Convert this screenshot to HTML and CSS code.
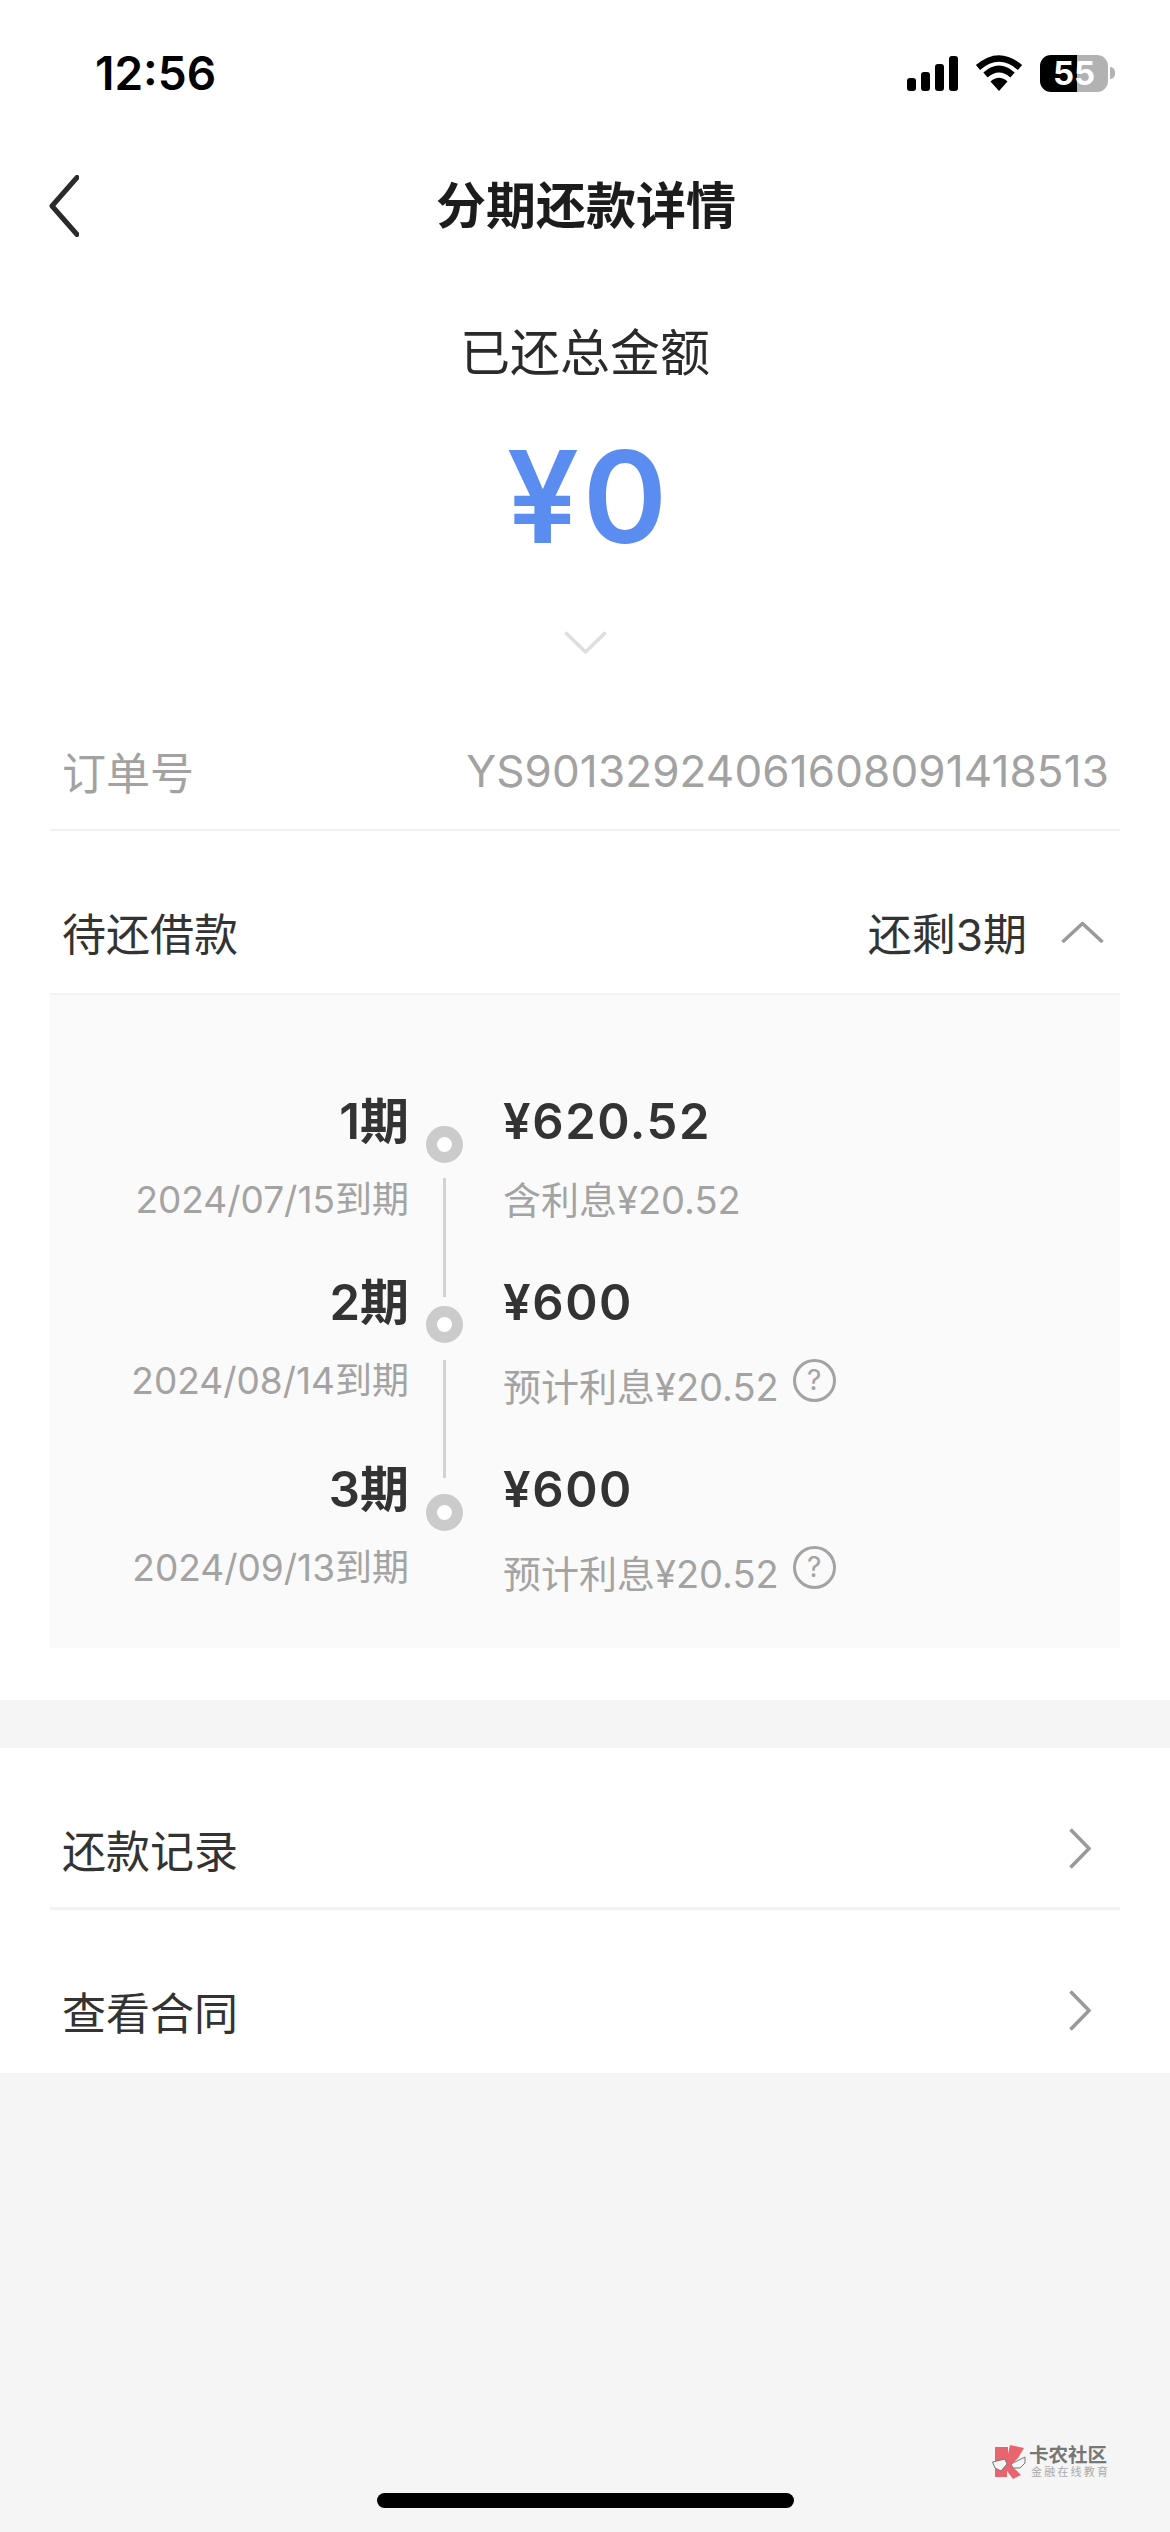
FILE: index.html
```html
<!DOCTYPE html>
<html>
	<head>
		<meta charset="utf-8">
		<title>分期还款详情</title>
		<link rel="stylesheet" href="styles.css">
	</head>
	<body>
	<div class="page">
		<div class="status">
			<span class="time">12:56</span>
			<div class="status-icons">
				<svg class="signal" width="51" height="35" viewBox="0 0 51 35">
					<rect x="0" y="22" width="9" height="13" rx="3"/>
					<rect x="14" y="16" width="9" height="19" rx="3"/>
					<rect x="28" y="8" width="9" height="27" rx="3"/>
					<rect x="42" y="0" width="9" height="35" rx="3"/>
				</svg>
				<svg class="wifi" width="48" height="36" viewBox="0 0 48 36">
					<path d="M24 36 L15.5 26.5 Q24 19 32.5 26.5 Z"/>
					<path d="M3 12.5 Q24 -5.5 45 12.5" fill="none" stroke="#000" stroke-width="6.5" stroke-linecap="butt"/>
					<path d="M10.5 20 Q24 8 37.5 20" fill="none" stroke="#000" stroke-width="6.5" stroke-linecap="butt"/>
				</svg>
				<div class="battery">
					<div class="battery-body"><span>55</span></div>
					<i class="battery-nub"></i>
				</div>
			</div>
		</div>

		<div class="nav">
			<svg class="back" width="30" height="62" viewBox="0 0 30 62">
				<path d="M28 2.5 L3 31 L28 59.5" fill="none" stroke="#2b2b2b" stroke-width="5" stroke-linecap="round" stroke-linejoin="round"/>
			</svg>
			<h1 class="title">分期还款详情</h1>
		</div>

		<div class="summary">
			<div class="summary-label">已还总金额</div>
			<div class="summary-amount">¥0</div>
			<svg class="summary-more" width="43" height="23" viewBox="0 0 43 23">
				<path d="M1.5 1.5 L21.5 21 L41.5 1.5" fill="none" stroke="#dedede" stroke-width="3.5"/>
			</svg>
		</div>

		<div class="order-row">
			<span>订单号</span>
			<span class="order-no">YS90132924061608091418513</span>
		</div>

		<div class="pending-row">
			<span>待还借款</span>
			<div class="pending-left">
				<span>还剩3期</span>
				<svg width="43" height="21" viewBox="0 0 43 21">
					<path d="M1.5 20 L21.5 1.5 L41.5 20" fill="none" stroke="#9a9a9a" stroke-width="3.5"/>
				</svg>
			</div>
		</div>

		<div class="plan">
			<div class="plan-left">
				<div class="period first">
					<div class="term">1期</div>
					<div class="due">2024/07/15到期</div>
				</div>
				<div class="period second">
					<div class="term">2期</div>
					<div class="due">2024/08/14到期</div>
				</div>
				<div class="period">
					<div class="term">3期</div>
					<div class="due">2024/09/13到期</div>
				</div>
			</div>
			<div class="plan-axis">
				<i class="dot"></i>
				<i class="line"></i>
				<i class="dot"></i>
				<i class="line next"></i>
				<i class="dot"></i>
			</div>
			<div class="plan-right">
				<div class="period first">
					<div class="money">¥620.52</div>
					<div class="interest"><span>含利息¥20.52</span></div>
				</div>
				<div class="period second">
					<div class="money">¥600</div>
					<div class="interest estimate"><span>预计利息¥20.52</span><i class="help">?</i></div>
				</div>
				<div class="period">
					<div class="money">¥600</div>
					<div class="interest estimate"><span>预计利息¥20.52</span><i class="help">?</i></div>
				</div>
			</div>
		</div>

		<div class="band"></div>

		<div class="links">
			<div class="link-row top">
				<span>还款记录</span>
				<svg width="22" height="41" viewBox="0 0 22 41"><path d="M1.5 1.5 L20 20.5 L1.5 39.5" fill="none" stroke="#999" stroke-width="3.5"/></svg>
			</div>
			<div class="link-row">
				<span>查看合同</span>
				<svg width="22" height="41" viewBox="0 0 22 41"><path d="M1.5 1.5 L20 20.5 L1.5 39.5" fill="none" stroke="#999" stroke-width="3.5"/></svg>
			</div>
		</div>

		<div class="foot">
			<i class="home-bar"></i>
			<div class="mark">
				<svg width="34" height="34" viewBox="0 0 34 34">
					<path d="M3 2 H16 V9 L18 0 L32 3 L26 13 L19 20 L29 30 L21 34 L15 26 V32 H3 Z" fill="#e8656f"/>
					<path d="M0.5 17 L13 14 L15 19 L9 26 L3 23 Z M19 19 L33 12 L33 18 L28 23 L21 23 Z" fill="#f4f4f4" stroke="#777" stroke-width="1"/>
				</svg>
				<div class="mark-text">
					<b>卡农社区</b>
					<span>金融在线教育</span>
				</div>
			</div>
		</div>
	</div>
	</body>
</html>
```

FILE: styles.css
```css
* {margin: 0;padding: 0;box-sizing: border-box;}
i {font-style: normal;}
svg {display: block;flex-shrink: 0;}
body {
	background: #fff;
	font-family: Inter, "Noto Sans CJK SC", sans-serif;
	color: #333;
}
.page {
	width: 1170px;
	height: 2532px;
	display: flex;
	flex-direction: column;
	position: relative;
	overflow: hidden;
}

/* status bar */
.status {
	height: 146px;
	flex-shrink: 0;
	display: flex;
	align-items: center;
	justify-content: space-between;
	padding: 0 55px 0 95px;
}
.time {
	font-size: 46px;
	font-weight: 600;
	color: #000;
}
.status-icons {
	display: flex;
	align-items: center;
}
.wifi {margin-left: 17px;}
.battery {
	display: flex;
	align-items: center;
	margin-left: 17px;
}
.battery-body {
	width: 68px;
	height: 37px;
	border-radius: 11px;
	background: linear-gradient(to right, #000 54%, #b2b2b2 54%);
	color: #fff;
	font-size: 33px;
	font-weight: 700;
	line-height: 37px;
	text-align: center;
}
.battery-nub {
	width: 5px;
	height: 12px;
	margin-left: 2px;
	background: #b2b2b2;
	border-radius: 0 6px 6px 0;
}

/* nav */
.nav {
	height: 120px;
	flex-shrink: 0;
	display: grid;
	grid-template-columns: 1fr auto 1fr;
	align-items: center;
	padding-left: 49px;
}
.title {
	font-size: 50px;
	font-weight: 600;
	color: #1c1c1c;
	line-height: 60px;
	margin-right: 47px;
}

/* summary */
.summary {
	display: flex;
	flex-direction: column;
	align-items: center;
	padding-top: 57px;
	flex-shrink: 0;
}
.summary-label {
	font-size: 50px;
	line-height: 60px;
	color: #2a2a2a;
}
.summary-amount {
	margin: 51px 0 0 8px;
	font-size: 128px;
	line-height: 125px;
	font-weight: 600;
	letter-spacing: 4px;
	color: #5b8df1;
}
.summary-more {margin-top: 72px;}

.order-row,
.pending-row {
	margin: 0 50px;
	padding: 0 11px 0 12px;
	display: flex;
	justify-content: space-between;
	align-items: center;
	font-size: 44px;
	flex-shrink: 0;
}
.order-row {
	margin-top: 59px;
	height: 118px;
	color: #a2a2a2;
	border-bottom: 2px solid #f1f1f1;
}
.order-no {letter-spacing: 0.13px;}
.pending-row {
	height: 162px;
	padding-top: 40px;
	color: #333;
}
.pending-left {
	display: flex;
	align-items: center;
	gap: 34px;
	padding-right: 5px;
}

/* plan list */
.plan {
	height: 655px;
	margin: 0 50px 52px;
	padding-top: 104px;
	background: #fafafa;
	border-top: 2px solid #f3f3f3;
	display: flex;
	flex-shrink: 0;
}
.plan-left {
	width: 359px;
	text-align: right;
}
.plan-axis {
	width: 37px;
	margin-left: 17px;
	padding-top: 27px;
	display: flex;
	flex-direction: column;
	align-items: center;
}
.dot {
	width: 37px;
	height: 37px;
	border-radius: 50%;
	border: 11px solid #cbcbcb;
	background: #fff;
}
.line {
	width: 3px;
	height: 119px;
	margin: 15px 0 9px;
	background: #d2d2d2;
}
.line.next {
	height: 118px;
	margin: 17px 0 16px;
}
.plan-right {
	margin-left: 40px;
}
.first {height: 181px;}
.second {height: 187px;}
.term,
.money {
	font-size: 49px;
	line-height: 46px;
	font-weight: 600;
	color: #333;
}
.money {letter-spacing: 1.6px;}
.due,
.interest {
	font-size: 38px;
	line-height: 38px;
	color: #a3a3a3;
}
.due {
	margin-top: 36px;
	font-size: 37px;
}
.interest {margin-top: 36px;}
.estimate {
	margin-top: 33px;
	display: flex;
	align-items: flex-start;
	gap: 14px;
}
.estimate span {margin-top: 9px;}
.help {
	width: 43px;
	height: 43px;
	border: 3px solid #a3a3a3;
	border-radius: 50%;
	font-size: 28px;
	line-height: 37px;
	text-align: center;
}

.band {
	height: 48px;
	flex-shrink: 0;
	background: #f5f5f5;
}

/* links */
.links {
	background: #fff;
	flex-shrink: 0;
}
.link-row {
	height: 163px;
	margin: 0 50px;
	padding: 38px 29px 0 12px;
	display: flex;
	justify-content: space-between;
	align-items: center;
	font-size: 44px;
	color: #333;
}
.link-row.top {
	height: 162px;
	padding-top: 42px;
	border-bottom: 3px solid #f2f2f2;
}

/* bottom */
.foot {
	flex: 1;
	background: #f5f5f5;
	display: flex;
	flex-direction: column;
	align-items: center;
	justify-content: flex-end;
	padding-bottom: 24px;
}
.home-bar {
	width: 417px;
	height: 15px;
	border-radius: 8px;
	background: #000;
}
.mark {
	position: absolute;
	left: 992px;
	top: 2445px;
	display: flex;
	align-items: center;
	gap: 3px;
}
.mark-text {
	display: flex;
	flex-direction: column;
}
.mark-text b {
	font-size: 19.5px;
	line-height: 21px;
	color: #777;
}
.mark-text span {
	font-size: 11px;
	line-height: 13px;
	letter-spacing: 2.2px;
	margin-left: 2px;
	color: #aaa;
}
```
